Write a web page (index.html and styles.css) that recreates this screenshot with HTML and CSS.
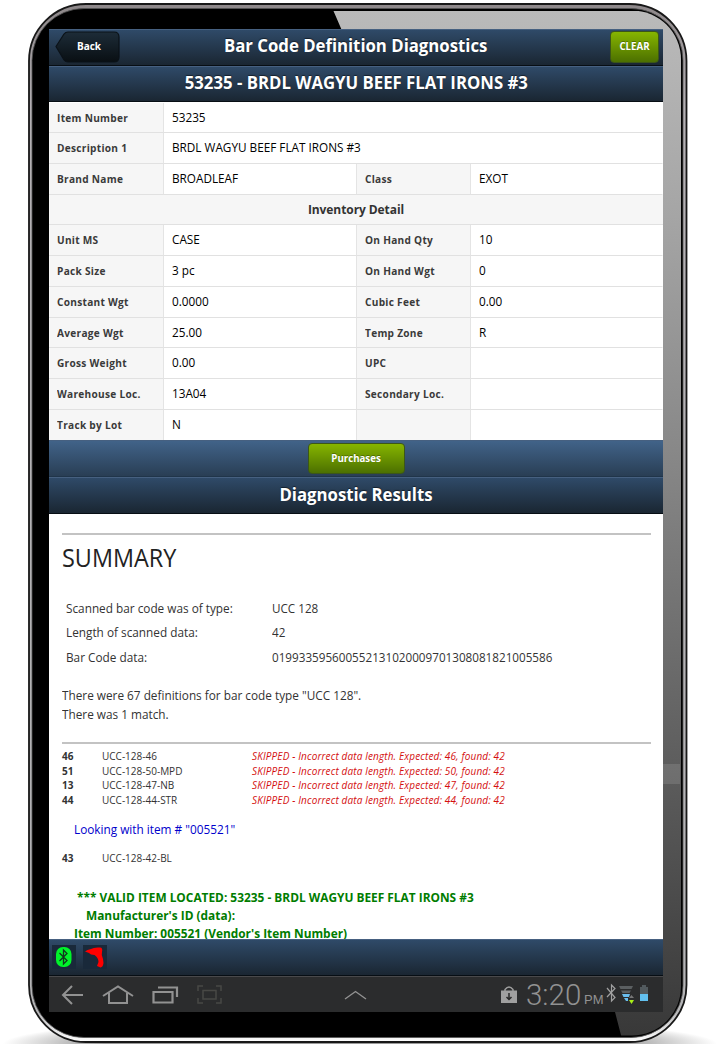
FILE: index.html
```html
<!DOCTYPE html>
<html lang="en">
<head>
<meta charset="utf-8">
<title>Bar Code Definition Diagnostics</title>
<link rel="stylesheet" href="styles.css">
</head>
<body>
<div class="tablet">
  <svg class="gloss" viewBox="0 0 660 1041" aria-hidden="true">
    <defs>
      <linearGradient id="shine" x1="0" y1="0" x2="0" y2="1">
        <stop offset="0" stop-color="#bababa"/><stop offset=".2" stop-color="#a5a5a5"/>
        <stop offset=".45" stop-color="#858585"/><stop offset=".7" stop-color="#626262"/>
        <stop offset="1" stop-color="#383838"/>
      </linearGradient>
      <linearGradient id="rim" x1="0" y1="0" x2="0" y2="1">
        <stop offset="0" stop-color="#8d8789"/><stop offset=".1" stop-color="#b4b0b4"/><stop offset=".97" stop-color="#b4b4b6"/><stop offset="1" stop-color="#fff"/>
      </linearGradient>
      <clipPath id="face"><rect x="6" y="7.500" width="647" height="1025" rx="49"/></clipPath>
    </defs>
    <rect x="1" y="1" width="657.500" height="1038" rx="57" fill="url(#rim)" stroke="#181818" stroke-width="1.800"/>
    <rect x="4" y="5.500" width="651" height="1029" rx="52" fill="#000" stroke="#555" stroke-width=".8"/>
    <path clip-path="url(#face)" d="M305.500 8L315 30 587 1009 594 1036H660V8Z" fill="url(#shine)"/>
    <rect x="635" y="761" width="17" height="20" fill="#fff" opacity=".12"/>
  </svg>
  <main class="screen">
    <header class="bar">
      <button class="back"><svg viewBox="0 0 66 33" aria-hidden="true"><defs><linearGradient id="bk" x1="0" y1="0" x2="0" y2="1"><stop offset="0" stop-color="#1d2c38"/><stop offset="1" stop-color="#090f13"/></linearGradient></defs><path d="M1 15.500L9 3Q10.500 1 13 1H59Q64 1 64 6V26Q64 31 59 31H13Q10.500 31 9 29Z" fill="url(#bk)" stroke="#0b1218" stroke-width="1.200"/></svg><span>Back</span></button>
      <h1>Bar Code Definition Diagnostics</h1>
      <button class="green clear">CLEAR</button>
    </header>
    <div class="bar"><h1>53235 - BRDL WAGYU BEEF FLAT IRONS #3</h1></div>
    <section class="grid">
      <b><span>Item Number</span></b><i class="wide"><span>53235</span></i>
      <b><span>Description 1</span></b><i class="wide"><span>BRDL WAGYU BEEF FLAT IRONS #3</span></i>
      <b><span>Brand Name</span></b><i><span>BROADLEAF</span></i><b><span>Class</span></b><i><span>EXOT</span></i>
      <h2>Inventory Detail</h2>
      <b><span>Unit MS</span></b><i><span>CASE</span></i><b><span>On Hand Qty</span></b><i><span>10</span></i>
      <b><span>Pack Size</span></b><i><span>3 pc</span></i><b><span>On Hand Wgt</span></b><i><span>0</span></i>
      <b><span>Constant Wgt</span></b><i><span>0.0000</span></i><b><span>Cubic Feet</span></b><i><span>0.00</span></i>
      <b><span>Average Wgt</span></b><i><span>25.00</span></i><b><span>Temp Zone</span></b><i><span>R</span></i>
      <b><span>Gross Weight</span></b><i><span>0.00</span></i><b><span>UPC</span></b><i></i>
      <b><span>Warehouse Loc.</span></b><i><span>13A04</span></i><b><span>Secondary Loc.</span></b><i></i>
      <b><span>Track by Lot</span></b><i><span>N</span></i><b></b><i></i>
    </section>
    <div class="bar light"><button class="green purchases">Purchases</button></div>
    <div class="bar results"><h1>Diagnostic Results</h1></div>
    <section class="report">
      <hr>
      <h3>SUMMARY</h3>
      <dl>
        <dt>Scanned bar code was of type:</dt><dd>UCC 128</dd>
        <dt>Length of scanned data:</dt><dd>42</dd>
        <dt>Bar Code data:</dt><dd>019933595600552131020009701308081821005586</dd>
      </dl>
      <p class="note">There were 67 definitions for bar code type "UCC 128".<br>There was 1 match.</p>
      <hr>
      <div class="defs">
        <b>46</b><span>UCC-128-46</span><em>SKIPPED - Incorrect data length. Expected: 46, found: 42</em>
        <b>51</b><span>UCC-128-50-MPD</span><em>SKIPPED - Incorrect data length. Expected: 50, found: 42</em>
        <b>13</b><span>UCC-128-47-NB</span><em>SKIPPED - Incorrect data length. Expected: 47, found: 42</em>
        <b>44</b><span>UCC-128-44-STR</span><em>SKIPPED - Incorrect data length. Expected: 44, found: 42</em>
      </div>
      <p class="looking">Looking with item # "005521"</p>
      <div class="defs"><b>43</b><span>UCC-128-42-BL</span></div>
      <div class="valid">
        <p class="v1">*** VALID ITEM LOCATED: 53235 - BRDL WAGYU BEEF FLAT IRONS #3</p>
        <p class="v2">Manufacturer's ID (data):</p>
        <p class="v3">Item Number: 005521 (Vendor's Item Number)</p>
      </div>
    </section>
    <footer class="bar status">
      <span class="tile"><svg viewBox="0 0 24 24"><rect x="4" y="2" width="15.500" height="20" rx="7" fill="#00f32a"/><path d="M7.500 8L15 15.500 11.500 19V5L15 8.500 7.500 16" fill="none" stroke="#12351f" stroke-width="1.300"/></svg></span>
      <span class="tile"><svg viewBox="0 0 24 24"><path d="M2 6.500Q4 4.500 8 4Q11 2 17 2.500Q20 2.500 19 7Q18 10 20 14L20.500 18Q20 22 17.500 22.500L14 21 15.500 17Q15.500 13 11.500 10L8 9.500 6 8Z" fill="#f00"/></svg></span>
    </footer>
    <nav class="nav">
      <svg class="keys" viewBox="0 0 340 36" fill="none" stroke="#929292" stroke-width="2" aria-hidden="true">
        <path d="M34 18H14M23 9L14 18 23 27"/>
        <path d="M54 19L69 9.500 84 19M60 16V26H78V16"/>
        <path d="M104.500 15H123.500V25.500H104.500ZM109 10.500H128V20" stroke-width="2.200"/>
        <g stroke="#484845" stroke-width="1.500"><path d="M149 14V9H154M167 9H172V14M172 21V26H167M154 26H149V21M154 13.500H167V22H154Z"/></g>
        <path d="M296 22L306.500 14.500 317 22" stroke-width="1.400"/>
      </svg>
      <svg class="bag" viewBox="0 0 18 18"><path d="M1 4.500H17V17H1Z" fill="#a0a0a0"/><path d="M5 6V3.500Q9-1.500 13 3.500V6" fill="none" stroke="#a0a0a0" stroke-width="1.400"/><path d="M9 7V13M6.500 11L9 13.500 11.500 11" fill="none" stroke="#292929" stroke-width="1.500"/></svg>
      <span class="time">3:20</span><span class="pm">PM</span>
      <svg class="tray" viewBox="0 0 46 22"><path d="M2 5L10 14.500 6.500 18V2L10 5.500 2 14" transform="translate(-1 0)" fill="none" stroke="#a0a0a0" stroke-width="1.200"/><path d="M13 3H27L25.500 6H14.500Z M15 7.500H25L23.500 10H16.500Z" fill="#5b5f61"/><path d="M16 11H24L23 14H17.500Z M18 15H22V18H20Z" fill="#69bdee"/><path d="M23 15L25.500 12 28 15Z" fill="#777"/><path d="M23 17H28L25.500 21Z" fill="#a8ef17"/><path d="M36 2H40V4H42V18H34V4H36Z" fill="#525a5e"/><path d="M34 11H42V18H34Z" fill="#62c0ef"/></svg>
    </nav>
  </main>
</div>
</body>
</html>
```
FILE: styles.css
```css
* { box-sizing: border-box; }
body { margin: 0; width: 720px; height: 1044px; overflow: hidden; background: radial-gradient(ellipse 340px 26px at 50% 100%, #999 75%, #fff 105%) #fff; font-family: "Open Sans", "Noto Sans", sans-serif; color: #222; }
h1, h2, h3, p, dl, dd { margin: 0; }
button { border: 0; padding: 0; font: inherit; font-weight: 700; color: #fff; }
.tablet { position: relative; width: 660px; height: 1041px; margin: 3px 0 0 28px; padding: 26px 0 0 21px; }
.gloss { position: absolute; inset: 0; width: 660px; height: 1041px; }
.screen { position: relative; width: 614px; height: 983px; background: #fff; overflow: hidden; white-space: nowrap; }
.bar { position: relative; display: flex; align-items: center; justify-content: center; height: 36.500px; background: linear-gradient(#2f4a68, #1a2632); border-top: 1px solid #466080; border-bottom: 1px solid #070e14; }
.bar h1 { font-size: 17.500px; line-height: 24px; font-weight: 700; color: #fff; text-shadow: 0 -1px 1px rgba(0,0,0,.5); padding-bottom: 4px; transform: scaleX(.957); }
.bar.light { height: 37px; background: linear-gradient(#416389, #293e54); border-bottom-color: #20354a; }
.bar.results { height: 37px; }
.back { position: absolute; left: 6px; top: 1px; width: 66px; height: 33px; background: none; font-size: 10px; }
.back svg { position: absolute; inset: 0; }
.back span { display: block; position: relative; left: 1px; top: -2px; }
.green { background: linear-gradient(#86b500, #4c7000); border-radius: 4px; border: 1px solid #3c5717; color: #fff; font-size: 9.700px; line-height: 26px; text-shadow: 0 -1px 0 rgba(0,0,0,.3); }
.clear { position: absolute; right: 4px; top: 1px; width: 49px; height: 32px; padding-bottom: 1px; }
.purchases { width: 97px; height: 31px; }
.grid { display: grid; grid-template-columns: 115px 193px 114px 192px; grid-auto-rows: 30.730px; height: 338px; padding-top: .6px; }
.grid > * { border-bottom: 1px solid #e1e1e1; padding: 0 8px; line-height: 29px; }
.grid span { display: inline-block; transform-origin: left; }
.grid b { background: #f6f6f6; border-right: 1px solid #e4e4e4; font-size: 11px; letter-spacing: .3px; color: #3a3a3a; }
.grid b span { transform: scaleX(.92); }
.grid i { font-style: normal; font-size: 12.500px; color: #000; border-right: 1px solid #e4e4e4; }
.grid i span { transform: scaleX(.94); }
.grid .wide { grid-column: span 3; }
.grid .wide, .grid i:nth-of-type(2n) { border-right-color: transparent; }
.grid h2 { grid-column: 1 / -1; background: #f6f6f6; text-align: center; font-size: 12px; color: #333; letter-spacing: -.08px; }
.report { height: 425px; padding: 19px 12px 0 13px; overflow: hidden; font-size: 12.500px; color: #333; }
hr { border: 0; height: 2px; margin: 0; background: #c3c3c3; }
h3 { font-size: 26px; font-weight: 400; line-height: 36px; margin-top: 4px; color: #222; transform: scaleX(.9); transform-origin: left; }
dl { display: grid; grid-template-columns: 206px 1fr; grid-auto-rows: 24.700px; margin: 21.500px 0 0 4px; line-height: 24px; }
dt, dd, .note, .looking, .v1, .v2, .v3 { transform: scaleX(.943); transform-origin: left; }
dd { transform: scaleX(.934); }
.note { line-height: 18.500px; margin: 16.500px 0 17.500px; }
.defs { display: grid; grid-template-columns: 40px 150px 1fr; grid-auto-rows: 14.700px; margin-top: 5.500px; font-size: 10px; line-height: 14px; }
.defs em { color: #d40f0f; letter-spacing: .14px; }
.looking { color: #00c; margin-left: 12px; line-height: 18px; margin-top: 13px; }
.looking + .defs { margin-top: 12px; }
.valid { color: #007c00; font-weight: 700; line-height: 18.400px; margin-top: 23px; }
.valid p { transform: scaleX(.95); }
.v1 { margin-left: 15px; } .v2 { margin-left: 24px; } .v3 { margin-left: 12px; }
.bar.status { justify-content: flex-start; padding-left: 3px; gap: 7px; }
.tile { width: 24px; height: 24px; background: #19293a; }
.tile svg { display: block; width: 24px; height: 24px; }
.nav { display: flex; align-items: center; height: 37px; background: #2b2c2d; border-top: 1px solid #49494b; color: #929292; font-family: "Liberation Sans", Arial, sans-serif; }
.keys { width: 340px; height: 36px; }
.bag { width: 18px; height: 18px; margin: 0 0 0 111px; }
.time { font-family: Roboto, sans-serif; font-size: 29.500px; font-weight: 300; margin: 0 0 0 8px; width: 55px; }
.pm { font-size: 13px; margin-top: 9px; margin-left: 3px; width: 22px; }
.tray { width: 46px; height: 22px; margin-bottom: 1px; }
```
